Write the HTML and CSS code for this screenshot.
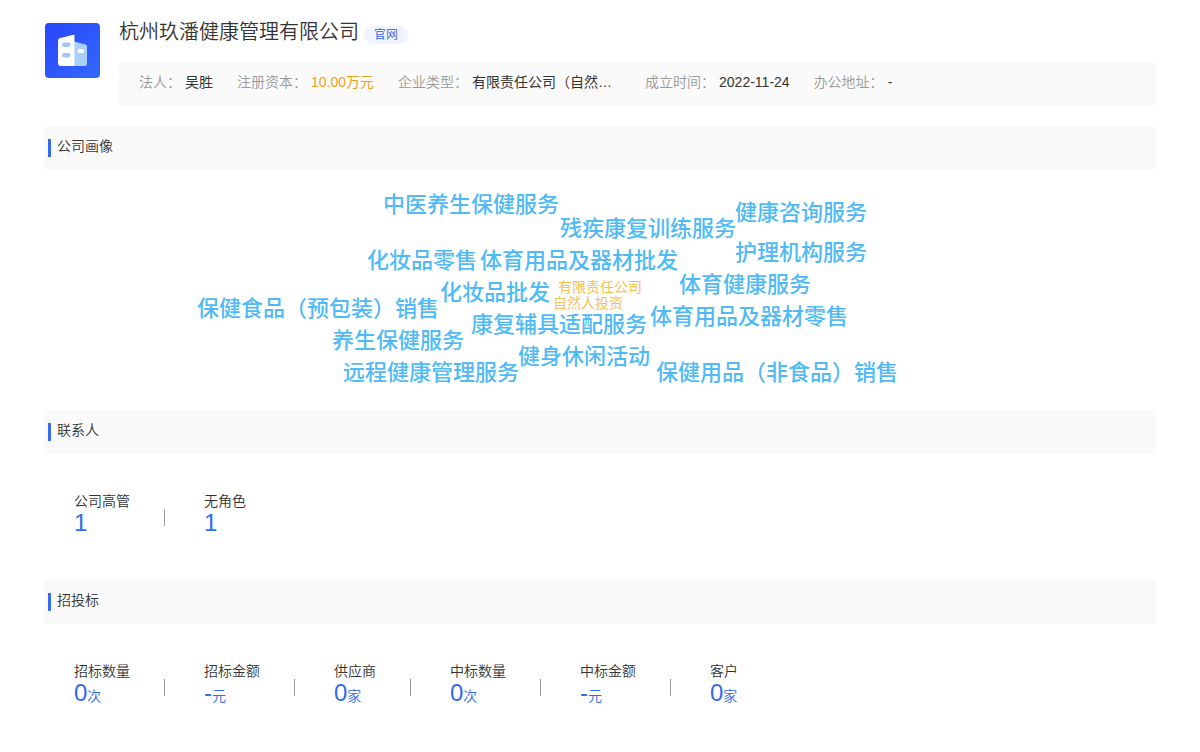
FILE: index.html
```html
<!DOCTYPE html>
<html lang="zh-CN">
<head>
<meta charset="utf-8">
<meta name="viewport" content="width=device-width, initial-scale=1">
<title>杭州玖潘健康管理有限公司</title>
<link rel="stylesheet" href="styles.css">
</head>
<body>
<main class="page">
  <header class="company">
    <svg class="logo" viewBox="0 0 56 56" aria-hidden="true">
      <defs>
        <linearGradient id="logo-bg" x1="0" y1="0" x2="1" y2="1">
          <stop offset="0" stop-color="#2846fd"/>
          <stop offset="1" stop-color="#3468fb"/>
        </linearGradient>
      </defs>
      <rect x="1" y="1" width="55" height="55" rx="4" fill="url(#logo-bg)"/>
      <path d="M30 19.500l11.500 3q1.500.4 1.500 2V42q0 2-2 2H30z" fill="#a9d0fb"/>
      <path d="M15.500 16.300L30.500 12.500v31.500H17q-3 0-3-3V18.500q0-1.800 1.500-2.200z" fill="#fff"/>
      <rect x="18" y="20.500" width="8.500" height="4.500" rx="2.200" fill="#a3c4f8"/>
      <rect x="18" y="31" width="8.500" height="4.500" rx="2.200" fill="#a3c4f8"/>
      <rect x="33.500" y="27" width="6.500" height="4" rx="2" fill="#fff"/>
    </svg>
    <div class="company-body">
      <div class="title-row">
        <h1 class="title">杭州玖潘健康管理有限公司</h1>
        <a class="site-link" href="#">官网</a>
      </div>
      <dl class="facts">
        <div class="fact"><dt>法人：</dt><dd>吴胜</dd></div>
        <div class="fact"><dt>注册资本：</dt><dd class="money">10.00万元</dd></div>
        <div class="fact"><dt>企业类型：</dt><dd class="wide">有限责任公司（自然…</dd></div>
        <div class="fact"><dt>成立时间：</dt><dd>2022-11-24</dd></div>
        <div class="fact"><dt>办公地址：</dt><dd>-</dd></div>
      </dl>
    </div>
  </header>

  <section>
    <h2 class="section-title">公司画像</h2>
    <div class="cloud">
      <div class="cloud-stage">
        <span class="word w1">中医养生保健服务</span>
        <span class="word w2">残疾康复训练服务</span>
        <span class="word w3">健康咨询服务</span>
        <span class="word w4">护理机构服务</span>
        <span class="word w5">化妆品零售</span>
        <span class="word w6">体育用品及器材批发</span>
        <span class="word w7">体育健康服务</span>
        <span class="word w8">化妆品批发</span>
        <span class="word w9">保健食品（预包装）销售</span>
        <span class="word w10">体育用品及器材零售</span>
        <span class="word w11">康复辅具适配服务</span>
        <span class="word w12">养生保健服务</span>
        <span class="word w13">健身休闲活动</span>
        <span class="word w14">远程健康管理服务</span>
        <span class="word w15">保健用品（非食品）销售</span>
        <span class="word minor w16">有限责任公司</span>
        <span class="word minor w17">自然人投资</span>
      </div>
    </div>
  </section>

  <section>
    <h2 class="section-title">联系人</h2>
    <ul class="stats">
      <li class="stat"><span class="name">公司高管</span><span class="value">1</span></li>
      <li class="stat"><span class="name">无角色</span><span class="value">1</span></li>
    </ul>
  </section>

  <section>
    <h2 class="section-title">招投标</h2>
    <ul class="stats">
      <li class="stat"><span class="name">招标数量</span><span class="value">0<small>次</small></span></li>
      <li class="stat"><span class="name">招标金额</span><span class="value">-<small>元</small></span></li>
      <li class="stat"><span class="name">供应商</span><span class="value">0<small>家</small></span></li>
      <li class="stat"><span class="name">中标数量</span><span class="value">0<small>次</small></span></li>
      <li class="stat"><span class="name">中标金额</span><span class="value">-<small>元</small></span></li>
      <li class="stat"><span class="name">客户</span><span class="value">0<small>家</small></span></li>
    </ul>
  </section>
</main>
</body>
</html>
```

FILE: styles.css
```css
* { box-sizing: border-box; }

body {
  margin: 0;
  background: #fff;
  color: #333;
  font: 350 14px/20px "Liberation Sans", "Noto Sans CJK SC", sans-serif;
}

h1, h2, dl, dd, ul { margin: 0; padding: 0; }

.page { padding: 16px 44px 0; }

.company {
  display: flex;
  gap: 19px;
  margin-bottom: 20px;
}

.logo {
  flex: none;
  width: 56px;
  height: 56px;
  margin-top: 6px;
}

.company-body { flex: 1; min-width: 0; }

.title-row {
  display: flex;
  gap: 5px;
  height: 46px;
}

.title { font-size: 20px; line-height: 32px; font-weight: 350; }

.site-link {
  height: 18px;
  margin-top: 10px;
  padding: 0 10px;
  border-radius: 9px;
  background: #eff4fd;
  color: #2f62e8;
  font-size: 12px;
  line-height: 18px;
  text-decoration: none;
}

.facts {
  display: flex;
  gap: 24px;
  padding: 10px 20px 14px;
  background: #fafafa;
}

.fact { display: flex; gap: 4px; white-space: nowrap; }
.fact dt { color: #999; }
.fact dd { font-weight: 400; }
.fact .money { color: #f0a020; }
.fact .wide { width: 149px; }

.section-title {
  display: flex;
  align-items: flex-start;
  height: 44px;
  padding: 10px 4px;
  background: #fafafa;
  font-size: 14px;
  font-weight: 350;
}

.section-title::before {
  content: "";
  width: 3px;
  height: 18px;
  margin: 3px 6px 0 0;
  background: #366aec;
}

.cloud { height: 240px; }

/* Free canvas for the tag cloud, centred in the section. */
.cloud-stage {
  position: relative;
  width: 840px;
  height: 240px;
  margin: 0 auto;
}

.word {
  position: absolute;
  color: #4fbaf6;
  font-size: 22px;
  line-height: 34px;
  font-weight: 500;
  white-space: nowrap;
}

.minor { color: #f8c050; font-size: 14px; line-height: 16px; font-weight: 400; }

.w1 { left: 203px; top: 18px; }
.w2 { left: 380px; top: 42px; }
.w3 { left: 555px; top: 26px; }
.w4 { left: 555px; top: 66px; }
.w5 { left: 187px; top: 74px; }
.w6 { left: 300px; top: 74px; }
.w7 { left: 499px; top: 98px; }
.w8 { left: 260px; top: 106px; }
.w9 { left: 17px; top: 122px; }
.w10 { left: 470px; top: 130px; }
.w11 { left: 291px; top: 138px; }
.w12 { left: 152px; top: 154px; }
.w13 { left: 338px; top: 170px; }
.w14 { left: 163px; top: 186px; }
.w15 { left: 476px; top: 186px; }
.w16 { left: 378px; top: 109px; }
.w17 { left: 373px; top: 125px; }

.stats {
  display: flex;
  padding: 37px 30px 45px;
  list-style: none;
}

.stat { display: flex; flex-direction: column; position: relative; }

.stat:not(:last-child) { margin-right: 74px; }

.stat:not(:last-child)::after {
  content: "";
  position: absolute;
  left: calc(100% + 34px);
  top: 18px;
  width: 1px;
  height: 17px;
  background: #999;
}

.name { line-height: 20px; }

.value {
  color: #2f6bea;
  font-size: 24px;
  line-height: 24px;
  white-space: nowrap;
}

.value small { font-size: 14px; }
```
